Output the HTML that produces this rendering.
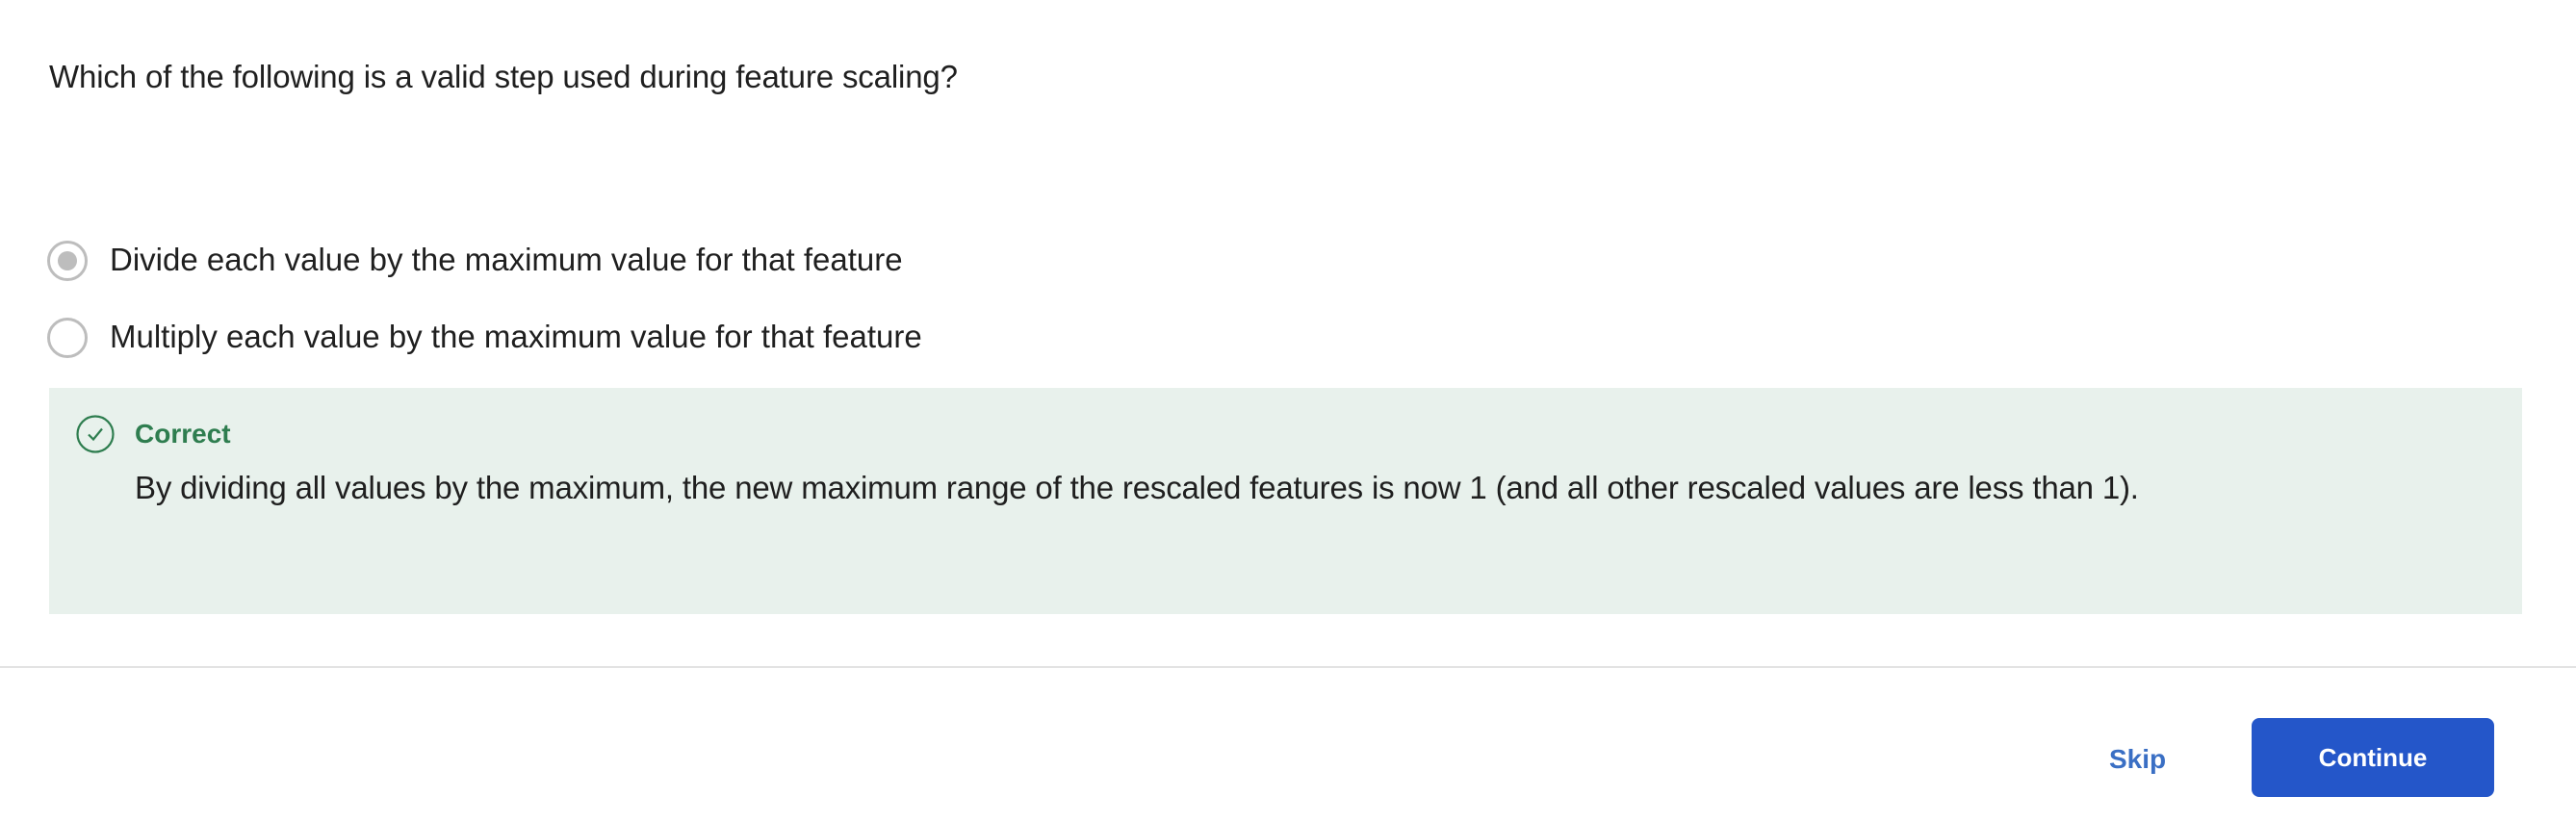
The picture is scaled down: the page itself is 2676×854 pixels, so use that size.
<!DOCTYPE html>
<html><head><meta charset="utf-8"><style>
html,body{margin:0;padding:0;background:#fff;width:2676px;height:854px;overflow:hidden;font-family:"Liberation Sans",sans-serif;color:#1f1f1f}
.a{position:absolute;white-space:nowrap}
.t{font-size:33px;line-height:38px;letter-spacing:-0.15px}
.radio{position:absolute;width:36px;height:36px;border:3px solid #bdbdbd;border-radius:50%;background:#fff}
.radio.on::after{content:"";position:absolute;left:8px;top:8px;width:20px;height:20px;border-radius:50%;background:#bdbdbd}
</style></head><body>
<div class="a t" style="left:51px;top:61px">Which of the following is a valid step used during feature scaling?</div>
<div class="radio on" style="left:49px;top:250px"></div>
<div class="a t" style="left:114px;top:251px;letter-spacing:0">Divide each value by the maximum value for that feature</div>
<div class="radio" style="left:49px;top:330px"></div>
<div class="a t" style="left:114px;top:331px;letter-spacing:0">Multiply each value by the maximum value for that feature</div>
<div class="a" style="left:51px;top:403px;width:2569px;height:235px;background:#e8f1ec"></div>
<svg class="a" style="left:79px;top:431px" width="40" height="40" viewBox="0 0 40 40"><circle cx="20" cy="20" r="18.5" fill="none" stroke="#2e7d4f" stroke-width="2.2"/><path d="M13 20.5l5 5 9-11" fill="none" stroke="#2e7d4f" stroke-width="2.2"/></svg>
<div class="a" style="left:140px;top:435px;font-size:28px;line-height:32px;font-weight:bold;color:#2e7d4f">Correct</div>
<div class="a t" style="left:140px;top:488px;letter-spacing:-0.18px">By dividing all values by the maximum, the new maximum range of the rescaled features is now 1 (and all other rescaled values are less than 1).</div>
<div class="a" style="left:0;top:692px;width:2676px;height:2px;background:#e3e3e3"></div>
<div class="a" style="left:2191px;top:773px;font-size:28px;line-height:32px;font-weight:bold;color:#3a6fc4">Skip</div>
<div class="a" style="left:2339px;top:746px;width:252px;height:82px;border-radius:8px;background:#2456c9;color:#fff;font-size:26px;font-weight:bold;line-height:82px;text-align:center">Continue</div>
</body></html>
